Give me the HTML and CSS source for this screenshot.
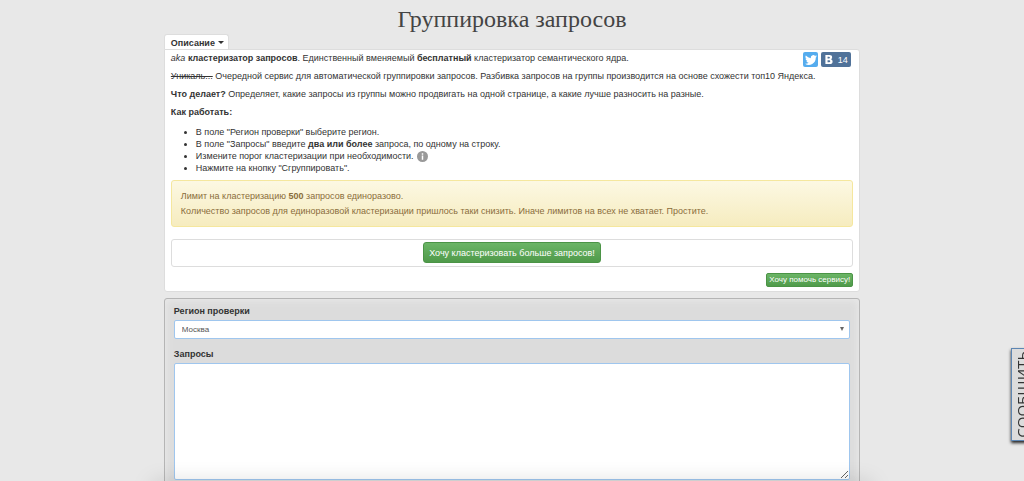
FILE: index.html
```html
<!DOCTYPE html>
<html lang="ru">
<head>
<meta charset="utf-8">
<title>Группировка запросов</title>
<link rel="stylesheet" href="styles.css">
</head>
<body>
<main class="page">
  <h1 class="title">Группировка запросов</h1>
  <button class="tab" type="button">Описание <span class="caret"></span></button>
  <section class="card">
    <div class="share">
      <a class="share-link twitter" href="#" aria-label="Twitter">
        <svg viewBox="0 0 24 24" width="12" height="12"><path fill="#fff" d="M24 4.6a10 10 0 0 1-2.8.8 5 5 0 0 0 2.1-2.7 10 10 0 0 1-3.1 1.2 4.9 4.9 0 0 0-8.4 4.5A14 14 0 0 1 1.7 3.2a4.9 4.9 0 0 0 1.5 6.5 4.9 4.9 0 0 1-2.2-.6v.1a4.9 4.9 0 0 0 3.9 4.8 5 5 0 0 1-2.2.1 4.9 4.9 0 0 0 4.6 3.4A9.9 9.9 0 0 1 0 19.5 14 14 0 0 0 21.5 7.1 10 10 0 0 0 24 4.6z"/></svg>
      </a>
      <a class="share-link vk" href="#" aria-label="ВКонтакте 14">
        <svg viewBox="0 0 8 10" width="8" height="9"><path fill="#fff" fill-rule="evenodd" d="M0 0h4.500q3 0 3 2.600 0 1.500-1.300 2.100Q8 5.200 8 7.100 8 10 4.700 10H0zM2.400 1.900v2h1.500q1.100 0 1.100-1t-1.100-1zM2.400 5.800v2.300h1.700q1.300 0 1.300-1.100T4.100 5.800z"/></svg>
        <span>14</span>
      </a>
    </div>
    <p><em>aka</em> <b>кластеризатор запросов</b>. Единственный вменяемый <b>бесплатный</b> кластеризатор семантического ядра.</p>
    <p><s>Уникаль...</s> Очередной сервис для автоматической группировки запросов. Разбивка запросов на группы производится на основе схожести топ10 Яндекса.</p>
    <p><b>Что делает?</b> Определяет, какие запросы из группы можно продвигать на одной странице, а какие лучше разносить на разные.</p>
    <p><b>Как работать:</b></p>
    <ul class="steps">
      <li>В поле "Регион проверки" выберите регион.</li>
      <li>В поле "Запросы" введите <b>два или более</b> запроса, по одному на строку.</li>
      <li>Измените порог кластеризации при необходимости. <svg class="info" viewBox="0 0 12 12" width="11" height="11"><circle cx="6" cy="6" r="6" fill="#999"/><path fill="#fff" d="M5.200 2.500h1.600v1.500H5.200zM5.200 4.800h1.600v4.700H5.200z"/></svg></li>
      <li>Нажмите на кнопку "Сгруппировать".</li>
    </ul>
    <div class="notice">
      <div>Лимит на кластеризацию <b>500</b> запросов единоразово.</div>
      <div>Количество запросов для единоразовой кластеризации пришлось таки снизить. Иначе лимитов на всех не хватает. Простите.</div>
    </div>
    <div class="offer"><button class="btn" type="button">Хочу кластеризовать больше запросов!</button></div>
    <div class="help"><button class="btn small" type="button">Хочу помочь сервису!</button></div>
  </section>
  <form class="form">
    <label for="region">Регион проверки</label>
    <div class="select-wrap">
      <select id="region" class="field"><option>Москва</option></select>
      <svg class="arrow" viewBox="0 0 5 5" width="4" height="4"><path fill="#666" d="M0 0h5L2.500 5z"/></svg>
    </div>
    <label for="queries">Запросы</label>
    <textarea id="queries" class="field queries"></textarea>
  </form>
</main>
<button class="report" type="button">СООБЩИТЬ</button>
<div class="edge-shade"></div>
</body>
</html>
```

FILE: styles.css
```css
* { box-sizing: border-box; }
html { height: 100%; overflow: hidden; }
body {
  margin: 0;
  height: 100%;
  background: #e8e8e8;
  color: #333;
  font: 9px/12px "Liberation Sans", Arial, sans-serif;
}
button, select, textarea { font: inherit; }
.page {
  width: 68%;
  margin: 0 auto;
  display: flex;
  flex-direction: column;
}
.title {
  margin: 6px 0 2px;
  font: 24px/26px "Liberation Serif", Georgia, serif;
  text-align: center;
  color: #444;
}
.tab {
  align-self: flex-start;
  display: flex;
  align-items: center;
  gap: 3px;
  height: 15px;
  padding: 1px 4px 0 6px;
  border: 1px solid #ddd;
  border-bottom: 0;
  border-radius: 3px 3px 0 0;
  background: #fff;
  color: #333;
  font-weight: bold;
}
.caret {
  border: 3px solid transparent;
  border-top-color: #333;
  border-bottom: 0;
}
.card {
  padding: 2px 6px 4px;
  border: 1px solid #ddd;
  border-radius: 0 3px 3px 3px;
  background: #fff;
}
.card p { margin: 0 0 6px; }
.share {
  float: right;
  display: flex;
  gap: 3px;
  margin-right: 2px;
}
.share-link {
  display: flex;
  align-items: center;
  justify-content: center;
  gap: 5px;
  height: 15px;
  border-radius: 2px;
  color: #fff;
  text-decoration: none;
}
.twitter { width: 15px; background: #55acee; }
.vk { width: 30px; background: #507299; }
.steps {
  margin: 8px 0 6px;
  padding-left: 25px;
}
.info { vertical-align: middle; display: inline-block; margin: -2px 0 -1px 1px; }
.notice {
  padding: 8px 9px 7px;
  border: 1px solid #f5e79e;
  border-radius: 3px;
  background: linear-gradient(#fcf8e3, #f6ecbf);
  color: #8a6d3b;
  line-height: 15px;
}
.offer {
  margin-top: 12px;
  padding: 2px 2px 3px;
  border: 1px solid #ddd;
  border-radius: 3px;
  text-align: center;
}
.btn {
  height: 21px;
  padding: 0 5px;
  border: 1px solid #4b9446;
  border-radius: 3px;
  background: linear-gradient(#6bb566, #4f9a4a);
  color: #fff;
}
.small {
  height: 14px;
  padding: 0 2px;
  border-radius: 2px;
  font-size: 8px;
  line-height: 12px;
}
.help { display: flex; justify-content: flex-end; margin-top: 6px; }
.form {
  display: flex;
  flex-direction: column;
  margin-top: 6px;
  padding: 6px 9px;
  border: 1px solid #b5b5b5;
  border-radius: 3px;
  background: #dcdcdc;
  box-shadow: inset 0 0 9px #ececec;
}
.form label { margin-bottom: 3px; font-weight: bold; }
.select-wrap { display: grid; align-items: center; margin-bottom: 9px; }
.select-wrap > * { grid-area: 1 / 1; }
.field {
  width: 100%;
  border: 1px solid #9fc6ee;
  border-radius: 2px;
  background: #fff;
  color: #555;
}
select.field {
  appearance: none;
  height: 19px;
  padding: 0 7px;
  font-size: 8px;
}
.arrow { justify-self: end; margin: 0 6px 2px 0; }
.queries { height: 117px; resize: vertical; }
.report {
  position: fixed;
  top: 348px;
  right: -9px;
  height: 93px;
  width: 22px;
  padding: 0;
  border: 1px solid #5d86b3;
  background: #dcdcdc;
  box-shadow: 0 2px 3px #222;
  color: #333;
  font: 15px/18px "Open Sans", sans-serif;
  writing-mode: sideways-lr;
  text-align: center;
  white-space: nowrap;
}
.edge-shade {
  position: fixed;
  left: 15%;
  right: 15%;
  bottom: -14px;
  height: 10px;
  box-shadow: 0 0 22px rgba(0, 0, 0, .25);
  pointer-events: none;
}
```
